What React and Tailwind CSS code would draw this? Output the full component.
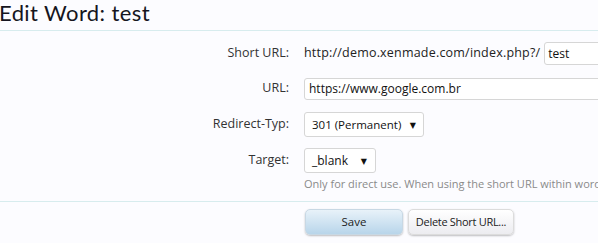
export default function App() {
  return (
    <div className="w-[598px] h-[243px] overflow-hidden bg-[#fcfcff] text-[#222]" style={{ fontFamily: '"Open Sans", "DejaVu Sans", sans-serif' }}>
      <h1 className="text-[22px] leading-[26px] h-[30px] -ml-[1px] tracking-[0.4px] text-[#151520]" style={{ fontFamily: 'Lato, "Open Sans", sans-serif' }}>
        Edit Word: test
      </h1>
      <div className="border-t border-[#d7ecee]">
        <div className="flex flex-col pt-[11px]">
          <div className="flex items-center h-[23px]">
            <div className="w-[304px] shrink-0 pr-[15px] text-right text-[12.5px] text-[#333]">Short URL:</div>
            <span className="text-[12.5px] text-[#222] whitespace-nowrap tracking-[0.2px]">http://demo.xenmade.com/index.php?/</span>
            <input
              readOnly
              value="test"
              className="ml-[4px] h-[23px] w-[80px] shrink-0 rounded-[3px] border border-[#d6d6d6] bg-white px-[3px] text-[12px] text-[#111] outline-none"
            />
          </div>
          <div className="flex items-center h-[23px] mt-[12px]">
            <div className="w-[304px] shrink-0 pr-[15px] text-right text-[12.5px] text-[#333]">URL:</div>
            <input
              readOnly
              value="https://www.google.com.br"
              className="h-[22px] w-[320px] shrink-0 rounded-[3px] border border-[#d6d6d6] bg-white px-[4px] text-[12px] text-[#111] outline-none"
            />
          </div>
          <div className="flex items-center h-[25px] mt-[12px]">
            <div className="w-[304px] shrink-0 pr-[15px] text-right text-[12.5px] text-[#333]">Redirect-Typ:</div>
            <div className="flex h-[25px] w-[120px] shrink-0 items-center justify-between rounded-[3px] border border-[#d6d6d6] bg-white pl-[7px] pr-[7px] text-[11.5px] text-[#111]">
              <span className="whitespace-nowrap">301 (Permanent)</span>
              <span className="text-[8px]">▼</span>
            </div>
          </div>
          <div className="flex items-center h-[25px] mt-[11px]">
            <div className="w-[304px] shrink-0 pr-[15px] text-right text-[12.5px] text-[#333]">Target:</div>
            <div className="flex h-[25px] w-[72px] shrink-0 items-center justify-between rounded-[3px] border border-[#d6d6d6] bg-white pl-[7px] pr-[8px] text-[12px] text-[#111]">
              <span>_blank</span>
              <span className="text-[8px]">▼</span>
            </div>
          </div>
          <div className="pl-[304px] mt-[3px] text-[11px] leading-[16px] text-[#8a8a8a] whitespace-nowrap">
            Only for direct use. When using the short URL within words, the target will always be _blank.
          </div>
        </div>
        <div className="mt-[9px] border-t border-[#d7ecee] pt-[7px] pl-[305px] flex gap-[5px]">
          <button className="h-[26px] w-[98px] shrink-0 rounded-[5px] border border-[#c8d8e4] bg-gradient-to-b from-[#e8f2f9] to-[#b8d5ea] text-[11.5px] text-[#222] shadow-[0_1px_2px_rgba(0,0,0,0.25)]">
            Save
          </button>
          <button className="h-[26px] w-[106px] shrink-0 whitespace-nowrap px-0 rounded-[5px] border border-[#dcdcdc] bg-gradient-to-b from-[#ffffff] to-[#ececf0] text-[11px] tracking-[-0.3px] text-[#222] shadow-[0_1px_2px_rgba(0,0,0,0.25)]">
            Delete Short URL...
          </button>
        </div>
      </div>
    </div>
  );
}
